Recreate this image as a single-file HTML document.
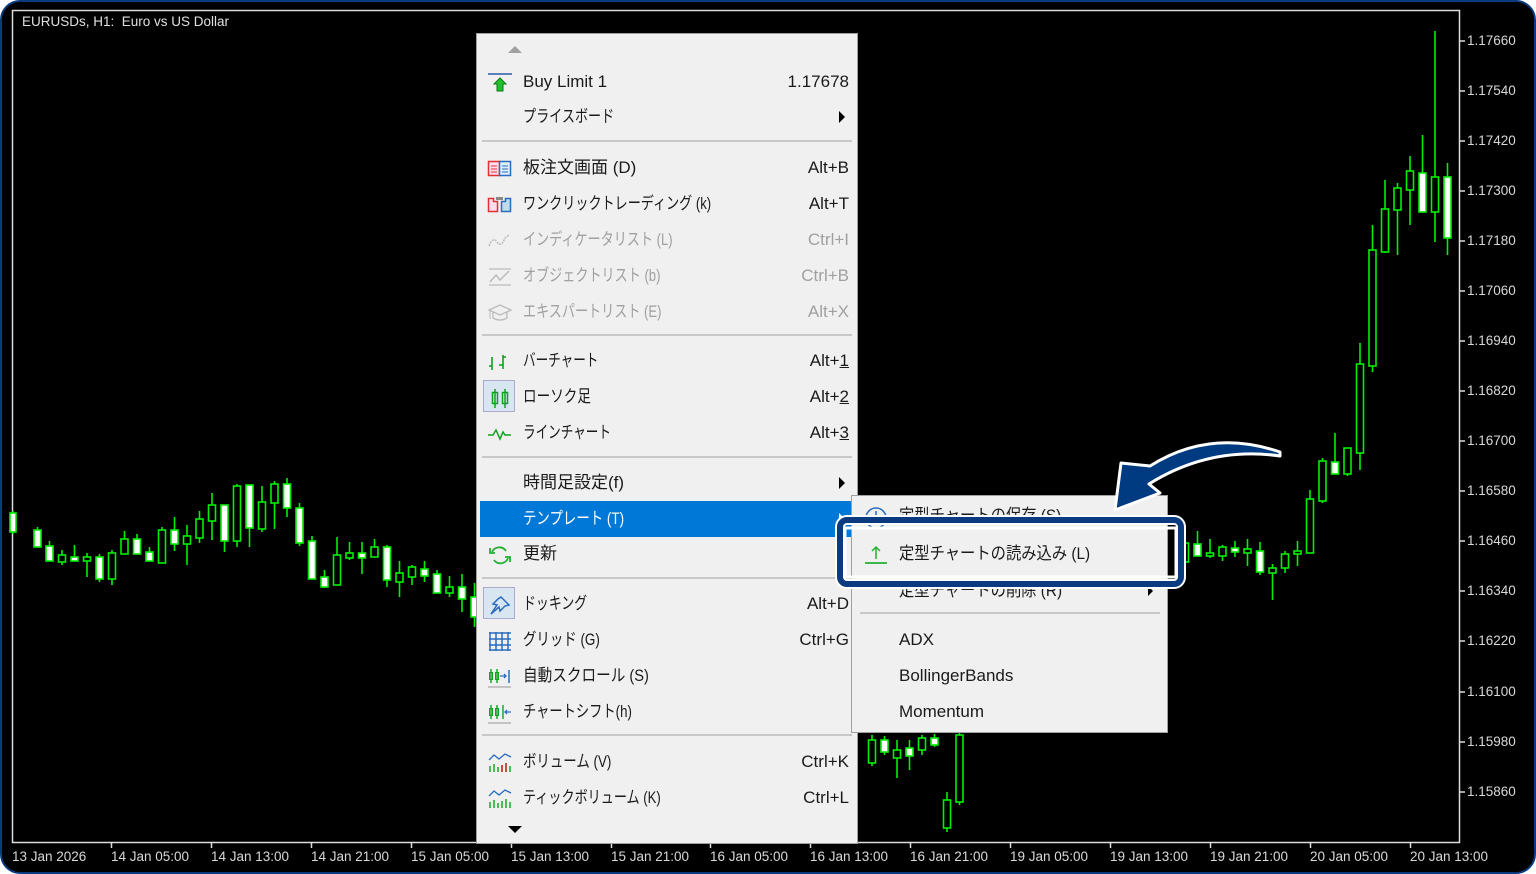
<!DOCTYPE html>
<html><head><meta charset="utf-8">
<style>
html,body{margin:0;padding:0;background:#fff;}
body{width:1536px;height:874px;position:relative;overflow:hidden;font-family:"Liberation Sans","Noto Sans CJK JP",sans-serif;}
#frame{position:absolute;left:0;top:0;width:1532px;height:870px;border:2px solid #0a3a80;border-radius:20px;background:#000;overflow:hidden;}
.t{position:absolute;color:#d8d8d8;font-size:13.5px;white-space:nowrap;}
#menu{position:absolute;left:476px;top:33px;width:382px;height:811px;background:#f0f0f0;border:1px solid #a0a0a0;box-sizing:border-box;}
.it{position:absolute;left:0;width:380px;height:36px;font-size:17px;color:#1a1a1a;white-space:nowrap;}
.it .l{position:absolute;left:46px;top:0;line-height:36px;transform-origin:left center;}
.it .r{position:absolute;right:8px;top:0;line-height:36px;}
.dis{color:#a0a0a0 !important;}
.sep{position:absolute;left:5px;width:370px;height:0;border-top:2px solid #c8c8c8;}
.ic{position:absolute;left:10px;top:8px;}
.arr{position:absolute;right:12px;top:12px;width:0;height:0;border-top:6px solid transparent;border-bottom:6px solid transparent;border-left:6px solid #000;}
#sub{position:absolute;left:851px;top:495px;width:317px;height:238px;background:#f0f0f0;border:1px solid #a0a0a0;box-sizing:border-box;}
.si{position:absolute;left:0;width:315px;height:36px;font-size:17px;color:#1a1a1a;white-space:nowrap;}
.si .l{position:absolute;left:47px;top:0;line-height:36px;transform-origin:left center;}
</style></head><body>
<div id="frame">
<svg width="1536" height="874" style="position:absolute;left:-2px;top:-2px">
<g stroke="#dcdcdc" stroke-width="1.5" fill="none">
<path d="M12.5 10.5 H1459.5 V842.5 H12.5 Z"/>
</g>
<g stroke="#dcdcdc" stroke-width="1.5">
<line x1="1459" y1="41" x2="1465" y2="41"/><line x1="1459" y1="91" x2="1465" y2="91"/><line x1="1459" y1="141" x2="1465" y2="141"/><line x1="1459" y1="191" x2="1465" y2="191"/><line x1="1459" y1="241" x2="1465" y2="241"/><line x1="1459" y1="291" x2="1465" y2="291"/><line x1="1459" y1="341" x2="1465" y2="341"/><line x1="1459" y1="391" x2="1465" y2="391"/><line x1="1459" y1="441" x2="1465" y2="441"/><line x1="1459" y1="491" x2="1465" y2="491"/><line x1="1459" y1="541" x2="1465" y2="541"/><line x1="1459" y1="591" x2="1465" y2="591"/><line x1="1459" y1="641" x2="1465" y2="641"/><line x1="1459" y1="692" x2="1465" y2="692"/><line x1="1459" y1="742" x2="1465" y2="742"/><line x1="1459" y1="792" x2="1465" y2="792"/>
<line x1="111.5" y1="842" x2="111.5" y2="848"/><line x1="211.5" y1="842" x2="211.5" y2="848"/><line x1="311.5" y1="842" x2="311.5" y2="848"/><line x1="411.5" y1="842" x2="411.5" y2="848"/><line x1="511.5" y1="842" x2="511.5" y2="848"/><line x1="611.5" y1="842" x2="611.5" y2="848"/><line x1="710.5" y1="842" x2="710.5" y2="848"/><line x1="810.5" y1="842" x2="810.5" y2="848"/><line x1="910.5" y1="842" x2="910.5" y2="848"/><line x1="1010.5" y1="842" x2="1010.5" y2="848"/><line x1="1110.5" y1="842" x2="1110.5" y2="848"/><line x1="1210.5" y1="842" x2="1210.5" y2="848"/><line x1="1310.5" y1="842" x2="1310.5" y2="848"/><line x1="1410.5" y1="842" x2="1410.5" y2="848"/>
</g>
<g stroke="#00f000" stroke-width="1.6">
<line x1="13" y1="511" x2="13" y2="534"/><rect x="10" y="513" width="6" height="19" fill="#fff"/>
<line x1="37.5" y1="527" x2="37.5" y2="547"/><rect x="34" y="530" width="7" height="17" fill="#fff"/>
<line x1="49.5" y1="541" x2="49.5" y2="561"/><rect x="46" y="546" width="7" height="15" fill="#fff"/>
<line x1="62" y1="550" x2="62" y2="565"/><rect x="58.5" y="555" width="7" height="7" fill="#000"/>
<line x1="74.5" y1="545" x2="74.5" y2="561"/><rect x="71" y="557" width="7" height="4" fill="#fff"/>
<line x1="87" y1="553" x2="87" y2="577"/><rect x="83.5" y="557" width="7" height="4" fill="#000"/>
<line x1="99.5" y1="554" x2="99.5" y2="582"/><rect x="96" y="557" width="7" height="22" fill="#fff"/>
<line x1="112" y1="550" x2="112" y2="585"/><rect x="108.5" y="553" width="7" height="26" fill="#000"/>
<line x1="124.5" y1="531" x2="124.5" y2="554"/><rect x="121" y="539" width="7" height="15" fill="#000"/>
<line x1="137" y1="534" x2="137" y2="554"/><rect x="133.5" y="539" width="7" height="15" fill="#fff"/>
<line x1="149.5" y1="547" x2="149.5" y2="561"/><rect x="146" y="552" width="7" height="9" fill="#fff"/>
<line x1="162" y1="527" x2="162" y2="563"/><rect x="158.5" y="530" width="7" height="33" fill="#000"/>
<line x1="174.5" y1="517" x2="174.5" y2="551"/><rect x="171" y="530" width="7" height="14" fill="#fff"/>
<line x1="187" y1="525" x2="187" y2="565"/><rect x="183.5" y="536" width="7" height="8" fill="#000"/>
<line x1="199.5" y1="511" x2="199.5" y2="543"/><rect x="196" y="519" width="7" height="19" fill="#000"/>
<line x1="212" y1="493" x2="212" y2="540"/><rect x="208.5" y="505" width="7" height="16" fill="#000"/>
<line x1="224.5" y1="505" x2="224.5" y2="552"/><rect x="221" y="505" width="7" height="36" fill="#fff"/>
<line x1="237" y1="484" x2="237" y2="547"/><rect x="233.5" y="486" width="7" height="55" fill="#000"/>
<line x1="249.5" y1="485" x2="249.5" y2="547"/><rect x="246" y="485" width="7" height="43" fill="#fff"/>
<line x1="262" y1="486" x2="262" y2="532"/><rect x="258.5" y="502" width="7" height="27" fill="#000"/>
<line x1="274.5" y1="481" x2="274.5" y2="529"/><rect x="271" y="484" width="7" height="19" fill="#000"/>
<line x1="287" y1="478" x2="287" y2="517"/><rect x="283.5" y="484" width="7" height="24" fill="#fff"/>
<line x1="299.5" y1="503" x2="299.5" y2="546"/><rect x="296" y="508" width="7" height="35" fill="#fff"/>
<line x1="312" y1="536" x2="312" y2="579"/><rect x="308.5" y="541" width="7" height="38" fill="#fff"/>
<line x1="324.5" y1="570" x2="324.5" y2="588"/><rect x="321" y="577" width="7" height="10" fill="#fff"/>
<line x1="337" y1="537" x2="337" y2="585"/><rect x="333.5" y="555" width="7" height="30" fill="#000"/>
<line x1="349.5" y1="542" x2="349.5" y2="560"/><rect x="346" y="553" width="7" height="5" fill="#000"/>
<line x1="362" y1="542" x2="362" y2="574"/><rect x="358.5" y="553" width="7" height="5" fill="#fff"/>
<line x1="374.5" y1="539" x2="374.5" y2="557"/><rect x="371" y="547" width="7" height="10" fill="#000"/>
<line x1="387" y1="545" x2="387" y2="587"/><rect x="383.5" y="547" width="7" height="33" fill="#fff"/>
<line x1="399.5" y1="561" x2="399.5" y2="597"/><rect x="396" y="573" width="7" height="9" fill="#000"/>
<line x1="412" y1="565" x2="412" y2="585"/><rect x="408.5" y="567" width="7" height="10" fill="#000"/>
<line x1="424.5" y1="561" x2="424.5" y2="582"/><rect x="421" y="569" width="7" height="7" fill="#fff"/>
<line x1="437" y1="570" x2="437" y2="593"/><rect x="433.5" y="574" width="7" height="19" fill="#fff"/>
<line x1="449.5" y1="576" x2="449.5" y2="597"/><rect x="446" y="587" width="7" height="6" fill="#000"/>
<line x1="462" y1="574" x2="462" y2="612"/><rect x="458.5" y="587" width="7" height="12" fill="#fff"/>
<line x1="474.5" y1="583" x2="474.5" y2="627"/><rect x="471" y="597" width="7" height="20" fill="#fff"/>
<line x1="872" y1="735" x2="872" y2="766"/><rect x="868.5" y="740" width="7" height="23" fill="#000"/>
<line x1="884.5" y1="736" x2="884.5" y2="755"/><rect x="881" y="740" width="7" height="12" fill="#fff"/>
<line x1="897" y1="740" x2="897" y2="778"/><rect x="893.5" y="750" width="7" height="8" fill="#000"/>
<line x1="909.5" y1="740" x2="909.5" y2="770"/><rect x="906" y="748" width="7" height="8" fill="#fff"/>
<line x1="922" y1="735" x2="922" y2="755"/><rect x="918.5" y="738" width="7" height="12" fill="#000"/>
<line x1="934.5" y1="734" x2="934.5" y2="747"/><rect x="931" y="738" width="7" height="7" fill="#fff"/>
<line x1="947" y1="792" x2="947" y2="832"/><rect x="943.5" y="800" width="7" height="28" fill="#000"/>
<line x1="959.5" y1="732" x2="959.5" y2="805"/><rect x="956" y="735" width="7" height="67" fill="#000"/>
<line x1="1185" y1="540" x2="1185" y2="565"/><rect x="1181.5" y="543" width="7" height="19" fill="#000"/>
<line x1="1197.5" y1="531" x2="1197.5" y2="556"/><rect x="1194" y="544" width="7" height="12" fill="#fff"/>
<line x1="1210" y1="539" x2="1210" y2="558"/><rect x="1206.5" y="553" width="7" height="3" fill="#000"/>
<line x1="1222.5" y1="545" x2="1222.5" y2="561"/><rect x="1219" y="547" width="7" height="9" fill="#000"/>
<line x1="1235" y1="541" x2="1235" y2="557"/><rect x="1231.5" y="548" width="7" height="4" fill="#fff"/>
<line x1="1247.5" y1="539" x2="1247.5" y2="566"/><rect x="1244" y="549" width="7" height="4" fill="#000"/>
<line x1="1260" y1="542" x2="1260" y2="575"/><rect x="1256.5" y="551" width="7" height="21" fill="#fff"/>
<line x1="1272.5" y1="564" x2="1272.5" y2="600"/><rect x="1269" y="568" width="7" height="5" fill="#000"/>
<line x1="1285" y1="551" x2="1285" y2="573"/><rect x="1281.5" y="554" width="7" height="14" fill="#000"/>
<line x1="1297.5" y1="541" x2="1297.5" y2="566"/><rect x="1294" y="551" width="7" height="3" fill="#000"/>
<line x1="1310" y1="490" x2="1310" y2="553"/><rect x="1306.5" y="499" width="7" height="54" fill="#000"/>
<line x1="1322.5" y1="458" x2="1322.5" y2="503"/><rect x="1319" y="461" width="7" height="40" fill="#000"/>
<line x1="1335" y1="433" x2="1335" y2="474"/><rect x="1331.5" y="462" width="7" height="12" fill="#fff"/>
<line x1="1347.5" y1="448" x2="1347.5" y2="476"/><rect x="1344" y="448" width="7" height="26" fill="#000"/>
<line x1="1360" y1="343" x2="1360" y2="470"/><rect x="1356.5" y="364" width="7" height="89" fill="#000"/>
<line x1="1372.5" y1="225" x2="1372.5" y2="372"/><rect x="1369" y="250" width="7" height="116" fill="#000"/>
<line x1="1385" y1="180" x2="1385" y2="253"/><rect x="1381.5" y="209" width="7" height="43" fill="#000"/>
<line x1="1397.5" y1="183" x2="1397.5" y2="255"/><rect x="1394" y="188" width="7" height="22" fill="#000"/>
<line x1="1410" y1="156" x2="1410" y2="225"/><rect x="1406.5" y="171" width="7" height="19" fill="#000"/>
<line x1="1422.5" y1="135" x2="1422.5" y2="212"/><rect x="1419" y="173" width="7" height="39" fill="#fff"/>
<line x1="1435" y1="31" x2="1435" y2="242"/><rect x="1431.5" y="177" width="7" height="35" fill="#000"/>
<line x1="1447.5" y1="163" x2="1447.5" y2="255"/><rect x="1444" y="177" width="7" height="61" fill="#fff"/>
</g>
</svg>
<div class="t" style="left:20px;top:12px;font-size:13.5px;color:#e0e0e0">EURUSDs, H1:&nbsp; Euro vs US Dollar</div>
<div class="t" style="left:1465px;top:31px">1.17660</div><div class="t" style="left:1465px;top:81px">1.17540</div><div class="t" style="left:1465px;top:131px">1.17420</div><div class="t" style="left:1465px;top:181px">1.17300</div><div class="t" style="left:1465px;top:231px">1.17180</div><div class="t" style="left:1465px;top:281px">1.17060</div><div class="t" style="left:1465px;top:331px">1.16940</div><div class="t" style="left:1465px;top:381px">1.16820</div><div class="t" style="left:1465px;top:431px">1.16700</div><div class="t" style="left:1465px;top:481px">1.16580</div><div class="t" style="left:1465px;top:531px">1.16460</div><div class="t" style="left:1465px;top:581px">1.16340</div><div class="t" style="left:1465px;top:631px">1.16220</div><div class="t" style="left:1465px;top:682px">1.16100</div><div class="t" style="left:1465px;top:732px">1.15980</div><div class="t" style="left:1465px;top:782px">1.15860</div>
<div class="t" style="left:10px;top:847px">13 Jan 2026</div><div class="t" style="left:109px;top:847px">14 Jan 05:00</div><div class="t" style="left:209px;top:847px">14 Jan 13:00</div><div class="t" style="left:309px;top:847px">14 Jan 21:00</div><div class="t" style="left:409px;top:847px">15 Jan 05:00</div><div class="t" style="left:509px;top:847px">15 Jan 13:00</div><div class="t" style="left:609px;top:847px">15 Jan 21:00</div><div class="t" style="left:708px;top:847px">16 Jan 05:00</div><div class="t" style="left:808px;top:847px">16 Jan 13:00</div><div class="t" style="left:908px;top:847px">16 Jan 21:00</div><div class="t" style="left:1008px;top:847px">19 Jan 05:00</div><div class="t" style="left:1108px;top:847px">19 Jan 13:00</div><div class="t" style="left:1208px;top:847px">19 Jan 21:00</div><div class="t" style="left:1308px;top:847px">20 Jan 05:00</div><div class="t" style="left:1408px;top:847px">20 Jan 13:00</div>
</div>

<div id="menu">
<div style="position:absolute;left:31px;top:12px;width:0;height:0;border-left:7px solid transparent;border-right:7px solid transparent;border-bottom:7px solid #a0a0a0"></div>
<div class="it" style="top:30px"><svg class="ic" width="26" height="22"><line x1="1" y1="2" x2="25" y2="2" stroke="#2a5ca8" stroke-width="1.5"/><path d="M13 6 L19 12 H16 V19 H10 V12 H7 Z" fill="#22c030" stroke="#0a7a10" stroke-width="1"/></svg><span class="l">Buy Limit 1</span><span class="r">1.17678</span></div>
<div class="it" style="top:65px"><span class="l" style="transform:scaleX(.77)">プライスボード</span><div class="arr"></div></div>
<div class="sep" style="top:106px"></div>
<div class="it" style="top:116px"><svg class="ic" width="26" height="22"><rect x="1.5" y="3.5" width="11" height="14" fill="#fde" stroke="#e03030" stroke-width="1.5"/><rect x="12.5" y="3.5" width="11" height="14" fill="#def" stroke="#2a6cc0" stroke-width="1.5"/><path d="M4 8h6M4 11h6M4 14h6" stroke="#e03030"/><path d="M15 8h6M15 11h6M15 14h6" stroke="#2a6cc0"/></svg><span class="l">板注文画面 (D)</span><span class="r">Alt+B</span></div>
<div class="it" style="top:152px"><svg class="ic" width="26" height="22"><path d="M1.5 4.5h5v3h4v10h-9z" fill="#fde" stroke="#e03030" stroke-width="1.5"/><path d="M23.5 4.5h-5v3h-4v10h9z" fill="#bde" stroke="#2a6cc0" stroke-width="1.5"/><rect x="9" y="3" width="7" height="3" fill="#888"/></svg><span class="l" style="transform:scaleX(.77)">ワンクリックトレーディング (k)</span><span class="r">Alt+T</span></div>
<div class="it dis" style="top:188px"><svg class="ic" width="26" height="22"><path d="M2 16 Q6 6 10 12 T18 8 L22 5" stroke="#bbb" stroke-width="1.5" fill="none" stroke-dasharray="2 1"/></svg><span class="l" style="transform:scaleX(.77)">インディケータリスト (L)</span><span class="r">Ctrl+I</span></div>
<div class="it dis" style="top:224px"><svg class="ic" width="26" height="22"><path d="M2 3h22M2 19h22" stroke="#bbb" stroke-width="1.3"/><path d="M3 16 L9 9 L13 14 L22 5" stroke="#bbb" stroke-width="1.5" fill="none"/></svg><span class="l" style="transform:scaleX(.77)">オブジェクトリスト (b)</span><span class="r">Ctrl+B</span></div>
<div class="it dis" style="top:260px"><svg class="ic" width="26" height="22"><path d="M2 8 L13 3 L24 8 L13 13 Z M6 10v6q7 4 14 0v-6" stroke="#bbb" stroke-width="1.3" fill="none"/><path d="M3 9v8" stroke="#bbb"/></svg><span class="l" style="transform:scaleX(.77)">エキスパートリスト (E)</span><span class="r">Alt+X</span></div>
<div class="sep" style="top:300px"></div>
<div class="it" style="top:309px"><svg class="ic" width="26" height="22"><path d="M5 6v13M2 15h3M16 4v14M16 6h3M12 14h4" stroke="#10a020" stroke-width="1.6" fill="none"/></svg><span class="l" style="transform:scaleX(.74)">バーチャート</span><span class="r">Alt+<u>1</u></span></div>
<div style="position:absolute;left:6px;top:346px;width:32px;height:32px;background:#d8e6f2;border:1px solid #aac;box-sizing:border-box"></div>
<div class="it" style="top:345px"><svg class="ic" width="26" height="22"><path d="M8 2v19M18 2v19" stroke="#10a020" stroke-width="1.5"/><rect x="5.5" y="5.5" width="5" height="11" fill="none" stroke="#10a020" stroke-width="1.5"/><rect x="15.5" y="5.5" width="5" height="11" fill="none" stroke="#10a020" stroke-width="1.5"/></svg><span class="l" style="transform:scaleX(.8)">ローソク足</span><span class="r">Alt+<u>2</u></span></div>
<div class="it" style="top:381px"><svg class="ic" width="26" height="22"><path d="M1 12h5l3-5 4 9 3-7 2 3h6" stroke="#10a020" stroke-width="1.5" fill="none"/></svg><span class="l" style="transform:scaleX(.74)">ラインチャート</span><span class="r">Alt+<u>3</u></span></div>
<div class="sep" style="top:422px"></div>
<div class="it" style="top:431px"><span class="l">時間足設定(f)</span><div class="arr"></div></div>
<div class="it" style="top:467px;left:3px;width:373px;background:#0078d7;color:#fff"><span class="l" style="left:43px;transform:scaleX(.79)">テンプレート (T)</span><div class="arr" style="border-left-color:#fff;right:8px"></div></div>
<div class="it" style="top:502px"><svg class="ic" width="26" height="22"><path d="M19 7 A8 8 0 0 0 5 8 M7 16 A8 8 0 0 0 21 14" stroke="#22b030" stroke-width="1.8" fill="none"/><path d="M3 4v5h5M23 18v-5h-5" stroke="#22b030" stroke-width="1.8" fill="none"/></svg><span class="l">更新</span></div>
<div class="sep" style="top:543px"></div>
<div style="position:absolute;left:6px;top:553px;width:32px;height:32px;background:#d8e6f2;border:1px solid #aac;box-sizing:border-box"></div>
<div class="it" style="top:552px"><svg class="ic" width="26" height="22"><path d="M14 3 L22 11 L18 12 L13 17 L12 13 L4 20 L10 11 L6 10 L11 5 Z" fill="none" stroke="#2a6cc0" stroke-width="1.5"/></svg><span class="l" style="transform:scaleX(.76)">ドッキング</span><span class="r">Alt+D</span></div>
<div class="it" style="top:588px"><svg class="ic" width="26" height="22"><path d="M2 3h22M2 9h22M2 15h22M2 20h22M3 2v19M9 2v19M15 2v19M21 2v19" stroke="#2a6cc0" stroke-width="1.5"/></svg><span class="l" style="transform:scaleX(.79)">グリッド (G)</span><span class="r">Ctrl+G</span></div>
<div class="it" style="top:624px"><svg class="ic" width="26" height="22"><path d="M4 3v14M10 3v14" stroke="#10a020" stroke-width="1.4"/><rect x="2.5" y="6.5" width="3" height="7" fill="none" stroke="#10a020"/><rect x="8.5" y="6.5" width="3" height="7" fill="none" stroke="#10a020"/><path d="M13 10h6M17 8l2 2-2 2" stroke="#2a6cc0" stroke-width="1.3" fill="none"/><path d="M22 4v13" stroke="#2a6cc0" stroke-width="1.5"/><path d="M1 21h23" stroke="#999"/></svg><span class="l" style="transform:scaleX(.86)">自動スクロール (S)</span></div>
<div class="it" style="top:660px"><svg class="ic" width="26" height="22"><path d="M4 3v14M10 3v14M16 3v14" stroke="#10a020" stroke-width="1.4"/><rect x="2.5" y="6.5" width="3" height="7" fill="none" stroke="#10a020"/><rect x="8.5" y="6.5" width="3" height="7" fill="none" stroke="#10a020"/><path d="M18 10h6M20 8l-2 2 2 2" stroke="#2a6cc0" stroke-width="1.3" fill="none"/><path d="M1 21h23" stroke="#999"/></svg><span class="l" style="transform:scaleX(.78)">チャートシフト(h)</span></div>
<div class="sep" style="top:700px"></div>
<div class="it" style="top:710px"><svg class="ic" width="26" height="22"><path d="M2 8 L7 3 L12 7 L18 2 L24 5" stroke="#2a6cc0" stroke-width="1.3" fill="none"/><path d="M3 20v-6M7 20v-8M11 20v-5M15 20v-7M19 20v-9M23 20v-6" stroke="#22b030" stroke-width="1.6"/><path d="M15 20v-7M19 20v-9" stroke="#e03030" stroke-width="1.6"/></svg><span class="l" style="transform:scaleX(.79)">ボリューム (V)</span><span class="r">Ctrl+K</span></div>
<div class="it" style="top:746px"><svg class="ic" width="26" height="22"><path d="M2 8 L7 3 L12 7 L18 2 L24 5" stroke="#2a6cc0" stroke-width="1.3" fill="none"/><path d="M3 20v-6M7 20v-8M11 20v-5M15 20v-7M19 20v-9M23 20v-6" stroke="#22b030" stroke-width="1.6"/></svg><span class="l" style="transform:scaleX(.77)">ティックボリューム (K)</span><span class="r">Ctrl+L</span></div>
<div style="position:absolute;left:31px;top:792px;width:0;height:0;border-left:7px solid transparent;border-right:7px solid transparent;border-top:7px solid #000"></div>
</div>

<div id="sub">
<div class="si" style="top:2px"><svg style="position:absolute;left:12px;top:8px" width="26" height="22"><circle cx="12" cy="12" r="10" fill="none" stroke="#2a6cc0" stroke-width="1.5"/><path d="M12 5v10M8 11l4 4 4-4" stroke="#2a6cc0" stroke-width="1.5" fill="none"/></svg><span class="l" style="transform:scaleX(.9)">定型チャートの保存 (S)</span></div>
<div class="si" style="top:40px"><svg style="position:absolute;left:12px;top:8px" width="26" height="22"><path d="M12 3v12M8 7l4-4 4 4" stroke="#22b030" stroke-width="1.5" fill="none"/><path d="M1 19h22" stroke="#22b030" stroke-width="1.8"/></svg><span class="l" style="transform:scaleX(.9)">定型チャートの読み込み (L)</span></div>
<div class="si" style="top:77px"><span class="l" style="transform:scaleX(.9)">定型チャートの削除 (R)</span><div style="position:absolute;right:14px;top:13px;width:0;height:0;border-top:5px solid transparent;border-bottom:5px solid transparent;border-left:5px solid #000"></div></div>
<div class="sep" style="top:116px;left:8px;width:300px"></div>
<div class="si" style="top:126px"><span class="l">ADX</span></div>
<div class="si" style="top:162px"><span class="l">BollingerBands</span></div>
<div class="si" style="top:198px"><span class="l">Momentum</span></div>
</div>

<svg width="1536" height="874" style="position:absolute;left:0;top:0;pointer-events:none">
<rect x="840" y="520" width="341" height="64" rx="7" fill="none" stroke="#fff" stroke-width="10"/>
<rect x="840" y="520" width="341" height="64" rx="7" fill="none" stroke="#0a3a80" stroke-width="6"/>
<rect x="845" y="528" width="331" height="49" fill="none" stroke="#fff" stroke-width="3"/>
<path d="M1280,452 Q1210,428 1150,466 L1121,463 L1115,510 L1160,493 L1149,484 Q1210,446 1280,456 Z" fill="#003a80" stroke="#fff" stroke-width="3" stroke-linejoin="round"/>
</svg>
</body></html>
